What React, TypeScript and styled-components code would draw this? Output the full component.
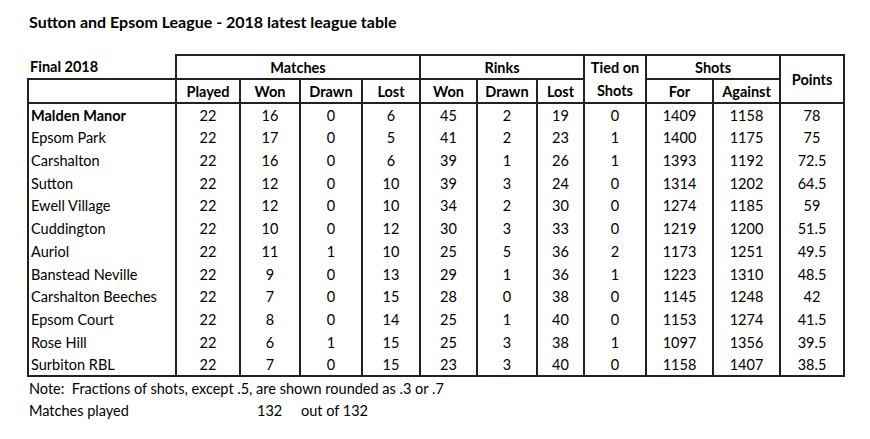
import React from 'react';
import styled, { createGlobalStyle } from 'styled-components';

const GlobalStyle = createGlobalStyle`
    body {
        margin: 0;
        background: #ffffff;
        color: #000000;
        font-family: Lato, 'Open Sans', sans-serif;
    }
`;

const Page = styled.div`
    padding: 12px 0 0 0;
`;

const Title = styled.div`
    padding-left: 29px;
    font-size: 16px;
    font-weight: 700;
    line-height: 20px;
    margin-bottom: 22px;
`;

const Table = styled.table`
    border-collapse: collapse;
    table-layout: fixed;
    width: 818px;
    margin-left: 27px;
    font-size: 14.5px;
`;

const HeadCell = styled.th<{ $open?: boolean; $left?: boolean }>`
    border: 2px solid #222222;
    height: 22px;
    padding: 0;
    font-weight: 700;
    text-align: ${({ $left }) => ($left ? 'left' : 'center')};
    padding-left: ${({ $left }) => ($left ? '2px' : '0')};
    ${({ $open }) => ($open ? 'border-top: none; border-left: none;' : '')}
`;

const StackedHead = styled.div`
    line-height: 23px;
`;

const Row = styled.tr`
    height: 22.75px;
`;

const Cell = styled.td`
    border-left: 2px solid #222222;
    border-right: 2px solid #222222;
    padding: 1px 0 0 0;
    text-align: center;
`;

const NameCell = styled(Cell)<{ $bold?: boolean }>`
    text-align: left;
    padding-left: 2px;
    font-weight: ${({ $bold }) => ($bold ? 700 : 400)};
    white-space: nowrap;
`;

const BodyEnd = styled.tbody`
    border-bottom: 2px solid #222222;
`;

const Notes = styled.div`
    padding-left: 29px;
    font-size: 14.5px;
    line-height: 22px;
    margin-top: 1px;
`;

const PlayedLine = styled.div`
    display: flex;
`;

const PlayedLabel = styled.span`
    width: 228px;
`;

const PlayedCount = styled.span`
    width: 44px;
`;

const colWidths = [148, 64, 60, 62, 58, 57, 60, 47, 62, 67, 67, 64];

const rows: [string, ...(number | string)[]][] = [
    ['Malden Manor', 22, 16, 0, 6, 45, 2, 19, 0, 1409, 1158, 78],
    ['Epsom Park', 22, 17, 0, 5, 41, 2, 23, 1, 1400, 1175, 75],
    ['Carshalton', 22, 16, 0, 6, 39, 1, 26, 1, 1393, 1192, 72.5],
    ['Sutton', 22, 12, 0, 10, 39, 3, 24, 0, 1314, 1202, 64.5],
    ['Ewell Village', 22, 12, 0, 10, 34, 2, 30, 0, 1274, 1185, 59],
    ['Cuddington', 22, 10, 0, 12, 30, 3, 33, 0, 1219, 1200, 51.5],
    ['Auriol', 22, 11, 1, 10, 25, 5, 36, 2, 1173, 1251, 49.5],
    ['Banstead Neville', 22, 9, 0, 13, 29, 1, 36, 1, 1223, 1310, 48.5],
    ['Carshalton Beeches', 22, 7, 0, 15, 28, 0, 38, 0, 1145, 1248, 42],
    ['Epsom Court', 22, 8, 0, 14, 25, 1, 40, 0, 1153, 1274, 41.5],
    ['Rose Hill', 22, 6, 1, 15, 25, 3, 38, 1, 1097, 1356, 39.5],
    ['Surbiton RBL', 22, 7, 0, 15, 23, 3, 40, 0, 1158, 1407, 38.5],
];

const subHeads = ['Played', 'Won', 'Drawn', 'Lost', 'Won', 'Drawn', 'Lost'];

export default function App() {
    return (
        <Page>
            <GlobalStyle />
            <Title>Sutton and Epsom League - 2018 latest league table</Title>
            <Table>
                <colgroup>
                    {colWidths.map((w, i) => (
                        <col key={i} style={{ width: w }} />
                    ))}
                </colgroup>
                <thead>
                    <tr>
                        <HeadCell $open $left>
                            Final 2018
                        </HeadCell>
                        <HeadCell colSpan={4}>Matches</HeadCell>
                        <HeadCell colSpan={3}>Rinks</HeadCell>
                        <HeadCell rowSpan={2}>
                            <StackedHead>Tied on</StackedHead>
                            <StackedHead>Shots</StackedHead>
                        </HeadCell>
                        <HeadCell colSpan={2}>Shots</HeadCell>
                        <HeadCell rowSpan={2}>Points</HeadCell>
                    </tr>
                    <tr>
                        <HeadCell />
                        {subHeads.map((h, i) => (
                            <HeadCell key={i}>{h}</HeadCell>
                        ))}
                        <HeadCell>For</HeadCell>
                        <HeadCell>Against</HeadCell>
                    </tr>
                </thead>
                <BodyEnd>
                    {rows.map(([name, ...values], r) => (
                        <Row key={name}>
                            <NameCell $bold={r === 0}>{name}</NameCell>
                            {values.map((v, i) => (
                                <Cell key={i}>{v}</Cell>
                            ))}
                        </Row>
                    ))}
                </BodyEnd>
            </Table>
            <Notes>
                <div>Note:&nbsp; Fractions of shots, except .5, are shown rounded as .3 or .7</div>
                <PlayedLine>
                    <PlayedLabel>Matches played</PlayedLabel>
                    <PlayedCount>132</PlayedCount>
                    <span>out of 132</span>
                </PlayedLine>
            </Notes>
        </Page>
    );
}
